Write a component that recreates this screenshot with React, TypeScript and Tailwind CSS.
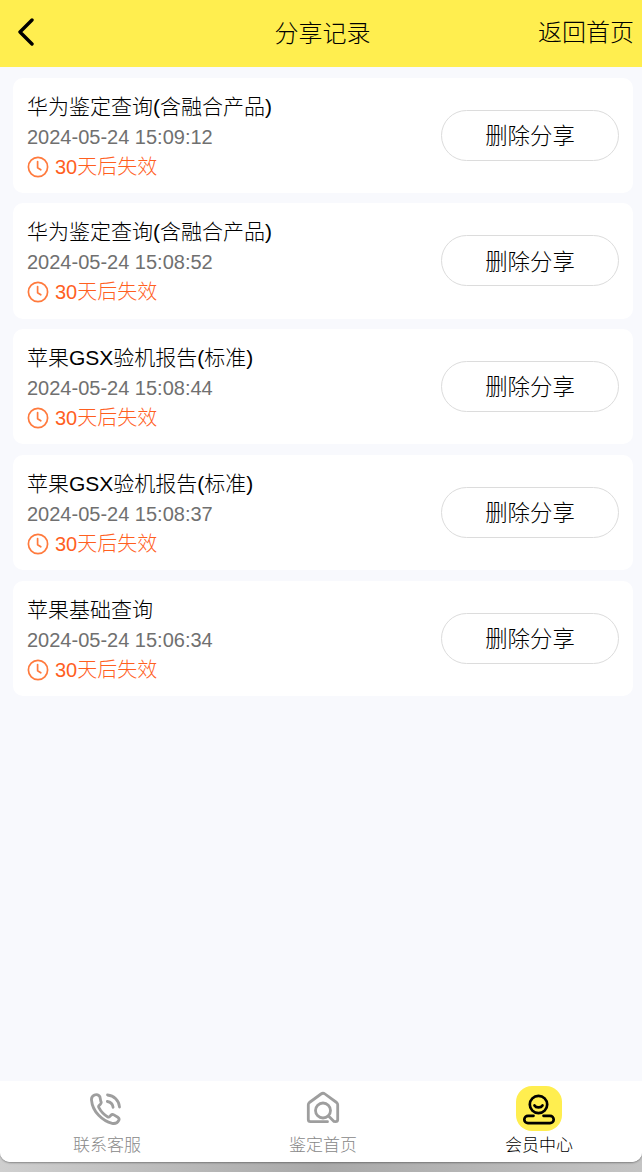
import React from "react"

const FONT = "font-['Liberation_Sans','Noto_Sans_CJK_SC',sans-serif]"

const records = [
  { id: 1, title: "华为鉴定查询(含融合产品)", time: "2024-05-24 15:09:12" },
  { id: 2, title: "华为鉴定查询(含融合产品)", time: "2024-05-24 15:08:52" },
  { id: 3, title: "苹果GSX验机报告(标准)", time: "2024-05-24 15:08:44" },
  { id: 4, title: "苹果GSX验机报告(标准)", time: "2024-05-24 15:08:37" },
  { id: 5, title: "苹果基础查询", time: "2024-05-24 15:06:34" },
]

function ClockIcon() {
  return (
    <svg width="22" height="22" viewBox="0 0 22 22" fill="none" stroke="#ff7a3d" strokeWidth="1.7" strokeLinecap="round" strokeLinejoin="round" className="shrink-0">
      <circle cx="11" cy="11" r="9.6" />
      <path d="M10.6 5.6v6.2l3.2 2" />
    </svg>
  )
}

function PhoneIcon() {
  return (
    <svg width="34" height="34" viewBox="0 0 34 34" fill="none" stroke="#9e9e9e" strokeWidth="2.8" strokeLinecap="round" strokeLinejoin="round">
      <path d="M4.500 4c-2 .9-3.200 2.800-3 5 .5 6 3.200 11.200 7.200 15.300 3.700 3.900 8.200 6.800 13.400 8 2.800.6 5.500-.6 6.700-3 .6-1.200.1-2.400-1-3.100l-3.900-2.300c-1-.6-2.200-.5-3 .4l-1.200 1.300c-.5.5-1.300.6-1.900.3-3.800-2.100-7-5.600-9-9.500-.3-.6-.2-1.400.3-1.900l1.300-1.300c.8-.8 1-2 .4-3L9.900 5.800C8.900 4 6.600 3.100 4.500 4z" />
      <path d="M17.500 4c6.500.6 11.500 5.500 12 12" />
      <path d="M17.300 10.500c3 .4 5.400 2.800 5.800 5.800" />
    </svg>
  )
}

function HomeSearchIcon() {
  return (
    <svg width="34" height="34" viewBox="0 0 34 34" fill="none" stroke="#9e9e9e" strokeWidth="2.8" strokeLinecap="round" strokeLinejoin="round">
      <path d="M21.500 30.700H4.500c-1.300 0-2.200-.9-2.200-2.200V13.800c0-.9.400-1.700 1.100-2.300L15 3c1.200-.9 2.800-.9 4 0l11.600 8.500c.7.600 1.100 1.400 1.100 2.300v14.700c0 1.300-.9 2.200-2.200 2.200" />
      <circle cx="17" cy="19.500" r="7.500" />
      <path d="M22.500 25l5.500 5.500" />
    </svg>
  )
}

function MemberIcon() {
  return (
    <svg width="34" height="34" viewBox="0 0 34 34" fill="none" stroke="#000000" strokeWidth="2.7" strokeLinecap="round" strokeLinejoin="round">
      <circle cx="16.500" cy="12.500" r="8.700" />
      <path d="M12.500 13.500c1.500 2.500 6.500 2.500 8 0" />
      <path d="M11.500 23.800H6a3.700 3.700 0 0 0 0 7.400h22a3.700 3.700 0 0 0 0-7.400h-6.500" />
    </svg>
  )
}

export default function App() {
  return (
    <div className={`${FONT} h-[1172px] w-[642px] overflow-hidden bg-gradient-to-r from-[#cfcfcf] via-[#a9a9a9] to-[#c4c4c4] font-light`}>
      <div className="flex h-[1162px] flex-col overflow-hidden rounded-b-[10px] bg-[#f8f9fd] shadow-[0_1px_2px_rgba(0,0,0,0.35)]">
        {/* Top bar */}
        <header className="relative flex h-[67px] shrink-0 items-center justify-center bg-[#ffee4f] pl-[3px]">
          <svg width="18" height="28" viewBox="0 0 18 28" fill="none" stroke="#000000" strokeWidth="3.4" strokeLinecap="round" strokeLinejoin="round" className="absolute left-[17px] top-[18px]">
            <path d="M15 2L3 14l12 12" />
          </svg>
          <h1 className="text-[24px] font-light leading-none text-black">分享记录</h1>
          <span className="absolute right-[8px] top-[21px] text-[24px] leading-none text-black">返回首页</span>
        </header>

        {/* Share records */}
        <main className="flex flex-1 flex-col gap-[10.550px] pl-[13px] pr-[9px] pt-[10.600px]">
          {records.map((record) => (
            <div key={record.id} className="flex h-[115.200px] items-center justify-between rounded-[10px] bg-white px-[14px]">
              <div className="flex flex-col pt-[3px]">
                <p className="text-[21px] leading-[30px] text-black">{record.title}</p>
                <p className="text-[20px] leading-[30px] text-[#707070]">{record.time}</p>
                <div className="flex items-center gap-[6px] leading-[30px]">
                  <ClockIcon />
                  <span className="text-[20px] text-[#ff5f1f]">30天后失效</span>
                </div>
              </div>
              <button className="h-[51px] w-[178px] rounded-full border border-[#dcdcdc] bg-white pt-[3px] text-[22.400px] text-black">
                删除分享
              </button>
            </div>
          ))}
        </main>

        {/* Bottom tabs */}
        <nav className="flex h-[81px] shrink-0 justify-between bg-white pl-[73px] pr-[69px]">
          <div className="flex w-[68px] flex-col items-center pt-[10px]">
            <PhoneIcon />
            <span className="mt-[9px] whitespace-nowrap text-[17px] leading-[24px] text-[#888888]">联系客服</span>
          </div>
          <div className="flex w-[68px] flex-col items-center pt-[10px]">
            <HomeSearchIcon />
            <span className="mt-[9px] whitespace-nowrap text-[17px] leading-[24px] text-[#888888]">鉴定首页</span>
          </div>
          <div className="flex w-[68px] flex-col items-center pt-[5px]">
            <div className="flex h-[45px] w-[46px] items-center justify-center rounded-[16px] bg-[#ffee4f]">
              <MemberIcon />
            </div>
            <span className="mt-[3px] whitespace-nowrap text-[17px] leading-[24px] text-black">会员中心</span>
          </div>
        </nav>
      </div>
    </div>
  )
}
